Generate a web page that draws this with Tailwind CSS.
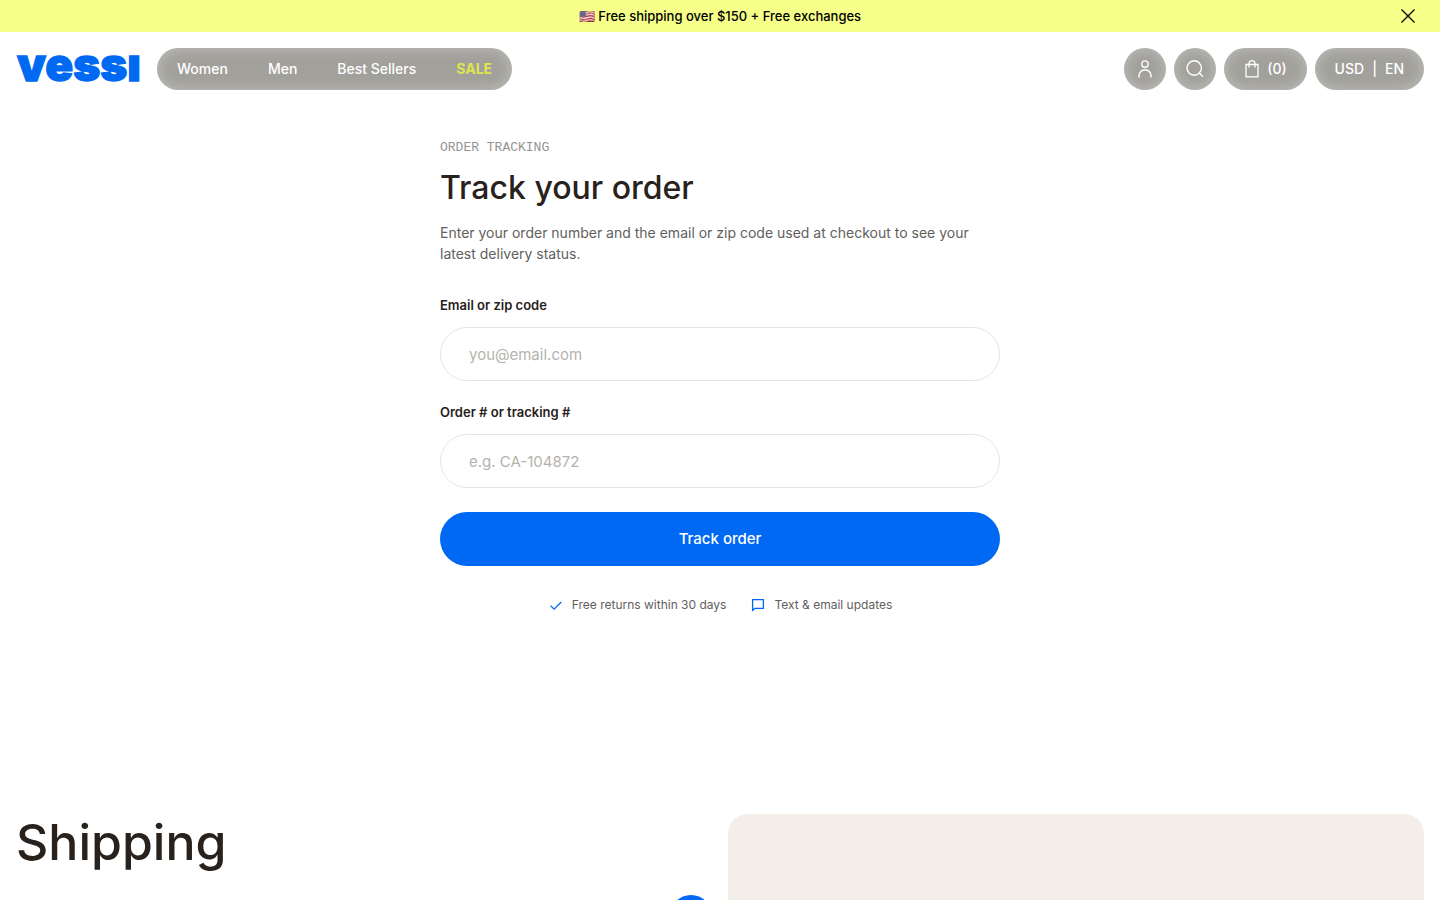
<!DOCTYPE html>
<html lang="en">
  <head>
    <meta charset="UTF-8" />
    <meta name="viewport" content="width=device-width, initial-scale=1.0" />
    <title>Track your order | Vessi</title>
    <script src="https://cdn.jsdelivr.net/npm/@tailwindcss/browser@4"></script>
  </head>
  <body class="bg-white font-['Inter',sans-serif] text-[#28211c]">
    <!-- Announcement -->
    <div class="relative flex h-8 items-center justify-center bg-[#f6ff87] text-black">
      <p class="text-[13px] leading-5 font-medium">🇺🇸 Free shipping over $150 + Free exchanges</p>
      <button type="button" aria-label="Close" class="absolute right-6 flex size-4 items-center justify-center">
        <svg class="size-4" viewBox="0 0 16 16" fill="none" stroke="currentColor" stroke-width="1.3">
          <path d="M1.5 1.5l13 13M14.5 1.5l-13 13" />
        </svg>
      </button>
    </div>

    <!-- Header -->
    <header class="flex items-center justify-between px-4 py-4">
      <div class="flex items-center gap-4">
        <a href="#" aria-label="Vessi">
          <svg class="h-[42px] w-[125px] overflow-visible" viewBox="0 0 125 42" fill="#0069f3" stroke="#0069f3" stroke-width="1.3">
            <text x="1" y="33" class="font-['Inter',sans-serif] text-[46px] font-black">vessı</text>
          </svg>
        </a>
        <nav class="flex h-[42px] items-center gap-10 rounded-full bg-[#a1a09b] px-5 text-sm font-medium text-white shadow-[inset_0_0_14px_rgba(255,255,255,0.35)]">
          <a href="#">Women</a>
          <a href="#">Men</a>
          <a href="#">Best Sellers</a>
          <a href="#" class="font-bold text-[#dfe650]">SALE</a>
        </nav>
      </div>
      <div class="flex items-center gap-2 text-sm font-medium text-white">
        <a href="#" aria-label="Account" class="flex size-[42px] items-center justify-center rounded-full bg-[#a1a09b] shadow-[inset_0_0_14px_rgba(255,255,255,0.35)]">
          <svg class="size-5" viewBox="0 0 20 20" fill="none" stroke="currentColor" stroke-width="1.4">
            <circle cx="10" cy="5.1" r="3.2" />
            <path d="M4 18.5v-1.7a6 6 0 0 1 12 0v1.7" />
          </svg>
        </a>
        <button type="button" aria-label="Search" class="flex size-[42px] items-center justify-center rounded-full bg-[#a1a09b] shadow-[inset_0_0_14px_rgba(255,255,255,0.35)]">
          <svg class="size-5" viewBox="0 0 20 20" fill="none" stroke="currentColor" stroke-width="1.4">
            <circle cx="9.2" cy="9" r="7.2" />
            <path d="M14.3 14.1l3.7 3.7" />
          </svg>
        </button>
        <button type="button" aria-label="Cart" class="flex h-[42px] items-center gap-[7px] rounded-full bg-[#a1a09b] px-5 shadow-[inset_0_0_14px_rgba(255,255,255,0.35)]">
          <svg class="h-5 w-4" viewBox="0 0 16 20" fill="none" stroke="currentColor" stroke-width="1.3">
            <path d="M2 5.5h12v12.3H2zM5 8.5V4.6a3 3 0 0 1 6 0v3.9" />
          </svg>
          <span>(0)</span>
        </button>
        <button type="button" class="flex h-[42px] items-center gap-2 rounded-full bg-[#a1a09b] px-5 shadow-[inset_0_0_14px_rgba(255,255,255,0.35)]">
          <span>USD</span><span>|</span><span>EN</span>
        </button>
      </div>
    </header>

    <main>
      <section class="mx-auto mt-8 max-w-[560px]">
        <p class="font-['Liberation_Mono',monospace] text-[13px] leading-5 text-[#949391] uppercase">Order tracking</p>
        <h1 class="mt-2.5 text-[32px] leading-10 font-medium">Track your order</h1>
        <p class="mt-3.5 text-sm leading-[21px] text-[#62605c]">Enter your order number and the email or zip code used at checkout to see your latest delivery status.</p>

        <form class="mt-8">
          <div class="flex flex-col gap-[22px]">
            <div>
              <label for="email" class="block text-[13px] leading-[18px] font-semibold">Email or zip code</label>
              <input id="email" type="text" placeholder="you@email.com" class="mt-[13px] block h-[54px] w-full rounded-full border border-[#e5e5e3] px-7 text-[15px] placeholder:text-[#b4b3ae]" />
            </div>
            <div>
              <label for="order" class="block text-[13px] leading-[18px] font-semibold">Order # or tracking #</label>
              <input id="order" type="text" placeholder="e.g. CA-104872" class="mt-[13px] block h-[54px] w-full rounded-full border border-[#e5e5e3] px-7 text-[15px] placeholder:text-[#b4b3ae]" />
            </div>
          </div>
          <button type="submit" class="mt-6 h-[54px] w-full rounded-full bg-[#0069f3] text-[15px] font-medium text-white">Track order</button>
        </form>

        <ul class="mt-7 flex justify-center gap-6 text-xs leading-[22px] text-[#62605c]">
          <li class="flex items-center gap-2">
            <svg class="size-4" viewBox="0 0 16 16" fill="none" stroke="#0069f3" stroke-width="1.3">
              <path d="M2.7 8.7l3.4 3.4L13.3 5" />
            </svg>
            Free returns within 30 days
          </li>
          <li class="flex items-center gap-2">
            <svg class="size-4" viewBox="0 0 16 16" fill="none" stroke="#0069f3" stroke-width="1.3">
              <path d="M2.6 2.6h10.8v8.8H4.8l-2.2 2z" />
            </svg>
            Text &amp; email updates
          </li>
        </ul>
      </section>

      <!-- Shipping -->
      <section class="mt-[198px] grid grid-cols-2 gap-4 px-4">
        <div>
          <h2 class="text-[50px] leading-[56px] font-medium">Shipping</h2>
          <div class="mt-[25px] flex justify-end">
            <button type="button" aria-label="Expand" class="size-[42px] rounded-full bg-[#0069f3]"></button>
          </div>
        </div>
        <div class="h-80 rounded-[20px] bg-[#f4eee8]"></div>
      </section>
    </main>
  </body>
</html>
